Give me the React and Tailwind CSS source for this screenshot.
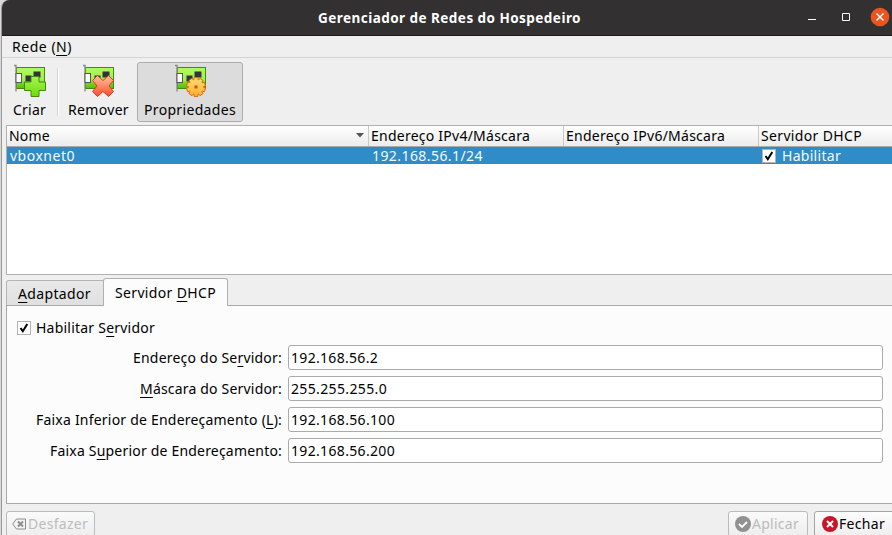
import { useLayoutEffect, useRef } from "react";

// A label tracked so that it fills the given width.
function Label({ width, className = "", children }) {
  const ref = useRef(null);
  useLayoutEffect(() => {
    const el = ref.current;
    el.style.letterSpacing = "0px";
    const natural = el.getBoundingClientRect().width;
    el.style.letterSpacing = (width - natural) / el.textContent.length + "px";
  }, [width]);
  return (
    <span ref={ref} className={"block shrink-0 whitespace-pre leading-5 " + className}>
      {children}
    </span>
  );
}

function Key({ children }) {
  return <span className="underline decoration-1 underline-offset-[3px]">{children}</span>;
}

// Outline of a ten-toothed gear centred on (22, 24).
const gearPoints = Array.from({ length: 10 }, (_, i) =>
  [[-0.2, 9.6], [0.2, 9.6], [0.26, 7.6], [0.37, 7.6]].map(([offset, r]) => {
    const a = ((i + 0.5) * Math.PI) / 5 + offset;
    return (22 + r * Math.cos(a)).toFixed(2) + "," + (24 + r * Math.sin(a)).toFixed(2);
  }).join(" ")
).join(" ");

function Card({ children }) {
  return (
    <svg width="34" height="35" viewBox="0 0 34 35" className="block">
      <defs>
        <linearGradient id="board" x1="0" y1="0" x2="0" y2="1">
          <stop offset="0" stopColor="#aefb5c" />
          <stop offset=".6" stopColor="#a0f050" />
          <stop offset=".75" stopColor="#76d51a" />
          <stop offset="1" stopColor="#5dba0c" />
        </linearGradient>
        <linearGradient id="plus" x1="0" y1="0" x2="0" y2="1">
          <stop offset="0" stopColor="#a4f552" />
          <stop offset="1" stopColor="#70dc08" />
        </linearGradient>
        <linearGradient id="cross" x1="0" y1="0" x2="0" y2="1">
          <stop offset="0" stopColor="#ffc09a" />
          <stop offset=".5" stopColor="#ff8a66" />
          <stop offset="1" stopColor="#fb4c2b" />
        </linearGradient>
        <linearGradient id="gear" x1="0" y1="0" x2="0" y2="1">
          <stop offset="0" stopColor="#ffdd78" />
          <stop offset="1" stopColor="#ffae2d" />
        </linearGradient>
      </defs>
      <rect x="3.5" y="4.5" width="28" height="21" fill="url(#board)" stroke="#438b0a" />
      <path d="M1 2.500h2v26" fill="none" stroke="#888" strokeWidth="1.3" />
      <rect x="3" y="10.500" width="5.500" height="9" fill="#fff" stroke="#555" />
      <path d="M12.500 12.500h6v6h-6zM20.500 8.500h7v6h-7z" fill="#333538" />
      {children}
    </svg>
  );
}

function Check() {
  return (
    <span className="flex h-[14px] w-[14px] shrink-0 items-center justify-center border border-[#b4b4b4] bg-white">
      <svg width="10" height="10" viewBox="0 0 10 10">
        <path d="M1.500 5l2.300 3.200L8.300 1" fill="none" stroke="#000" strokeWidth="2" />
      </svg>
    </span>
  );
}

function Field({ label, labelWidth, value, valueWidth }) {
  return (
    <div className="flex h-[25px] items-center">
      <div className="flex w-[275px] justify-end">
        <Label width={labelWidth}>{label}</Label>
      </div>
      <div className="ml-[6px] flex h-[25px] w-[595px] items-center rounded-[3px] border border-[#aaa] bg-white pl-[2px]">
        <Label width={valueWidth}>{value}</Label>
      </div>
    </div>
  );
}

export default function App() {
  return (
    <div className="h-[535px] w-[892px] overflow-hidden bg-[#d9d9d9] pl-px font-['Noto_Sans',sans-serif] text-[14px] text-black">
      <div className="flex h-full w-[891px] flex-col overflow-hidden rounded-tl-[8px] border-l border-[#999] bg-[#efefef]">
        <div className="flex h-9 shrink-0 items-center border-b border-[#1c1b1b] bg-[#333031] text-white">
          <Label width={263} className="ml-[316px] text-[13.5px] font-bold">Gerenciador de Redes do Hospedeiro</Label>
          <svg width="88" height="35" viewBox="804 0 88 35" className="ml-[223px] shrink-0">
            <path d="M808 19.500h8" stroke="#fff" />
            <path d="M842.500 13.500h7v7h-7z" fill="none" stroke="#fff" />
            <circle cx="880" cy="17" r="9.300" fill="#e95420" />
            <path d="M876.500 13.500l7 7m0-7l-7 7" stroke="#fff" strokeWidth="1.500" />
          </svg>
        </div>

        <div className="flex h-[22px] shrink-0 border-b border-[#d4d4d4] pl-[10px] pt-px">
          <Label width={60}>Rede (<Key>N</Key>)</Label>
        </div>

        <div className="flex h-[67px] shrink-0 pt-[4px]">
          <div className="flex w-[55px] flex-col items-center">
            <div className="mt-px h-[37px]">
              <Card>
                <path d="M18 13.500h8v5.500h6.500v8.500H26v6h-8v-6h-6.500V19H18z" fill="url(#plus)" stroke="#3f8d08" />
              </Card>
            </div>
            <Label width={33}>Criar</Label>
          </div>
          <div className="mt-[6px] h-12 w-[2px] border-l border-[#d3d3d3] bg-white" />
          <div className="flex w-[78px] flex-col items-center">
            <div className="mt-px h-[37px] pl-[2px]">
              <Card>
                <path d="M15.500 12.500L21 17.500 26.500 12.500 31.500 17.500 27 23l4.500 5.500-5 5L21 28.500l-5.500 5-5-5L15 23l-4.500-5.500z" fill="url(#cross)" stroke="#d93c20" strokeLinejoin="round" />
              </Card>
            </div>
            <Label width={61} className="ml-px">Remover</Label>
          </div>
          <div className="flex h-[60px] w-[106px] flex-col items-center rounded-[3px] border border-[#adadad] bg-[#dcdcdc]">
            <div className="h-[37px] pl-[2px]">
              <Card>
                <polygon points={gearPoints} fill="url(#gear)" stroke="#d96e0c" strokeLinejoin="round" />
                <circle cx="22" cy="24" r="1.700" fill="#bf5b12" stroke="#ee8b28" />
              </Card>
            </div>
            <Label width={92}>Propriedades</Label>
          </div>
        </div>

        <div className="ml-1 h-[150px] shrink-0 border-y border-l border-[#b0b0b0] bg-white">
          <div className="flex h-[21px] border-b border-[#aaa] bg-gradient-to-b from-white to-[#ececec]">
            <div className="flex w-[362px] justify-between border-r border-[#c9c9c9] pl-[2px] pr-[4px]">
              <Label width={41}>Nome</Label>
              <svg width="8" height="5" className="mt-[7px]"><path d="M0 0h8L4 4.500z" fill="#555" /></svg>
            </div>
            <div className="w-[195px] border-r border-[#c9c9c9] pl-[2px]"><Label width={159} className="w-fit">Endereço IPv4/Máscara</Label></div>
            <div className="w-[195px] border-r border-[#c9c9c9] pl-[2px]"><Label width={159} className="w-fit">Endereço IPv6/Máscara</Label></div>
            <div className="pl-[2px]"><Label width={101} className="w-fit">Servidor DHCP</Label></div>
          </div>
          <div className="flex h-[17px] items-center bg-[#308cc6] text-[#f4f9fc]">
            <div className="w-[365px] pl-[3px]"><Label width={65} className="w-fit">vboxnet0</Label></div>
            <div className="w-[390px]"><Label width={111} className="w-fit">192.168.56.1/24</Label></div>
            <Check />
            <Label width={59} className="ml-[6px]">Habilitar</Label>
          </div>
        </div>

        <div className="relative z-10 ml-1 mt-[3px] flex h-[27px] shrink-0 items-end">
          <div className="flex h-[25px] w-[98px] rounded-tl-[3px] border border-b-0 border-[#b4b4b4] bg-gradient-to-b from-[#e9e9e9] to-[#e0e0e0] pl-[11px] pt-[3px]">
            <Label width={73}><Key>A</Key>daptador</Label>
          </div>
          <div className="-mb-px -ml-px flex h-[28px] w-[125px] rounded-t-[3px] border border-b-0 border-[#b0b0b0] bg-[#fcfcfc] pl-[11px] pt-[4px]">
            <Label width={101}>Servidor <Key>D</Key>HCP</Label>
          </div>
        </div>
        <div className="ml-1 h-[199px] shrink-0 border-y border-l border-[#a9a9a9] bg-[#fcfcfc] pt-[12px]">
          <div className="flex h-5 items-center pl-[10px]">
            <Check />
            <Label width={119} className="ml-[5px]">Habilitar S<Key>e</Key>rvidor</Label>
          </div>
          <div className="mt-[7px] flex flex-col gap-[6px]">
            <Field label={<>Endereço do Se<Key>r</Key>vidor:</>} labelWidth={149} value="192.168.56.2" valueWidth={87} />
            <Field label={<><Key>M</Key>áscara do Servidor:</>} labelWidth={142} value="255.255.255.0" valueWidth={96} />
            <Field label={<>Faixa Inferior de Endereçamento (<Key>L</Key>):</>} labelWidth={246} value="192.168.56.100" valueWidth={104} />
            <Field label={<>Faixa S<Key>u</Key>perior de Endereçamento:</>} labelWidth={232} value="192.168.56.200" valueWidth={104} />
          </div>
        </div>

        <div className="flex h-[32px] shrink-0 pl-1 pt-[7px]">
          <div className="flex h-[26px] w-[89px] shrink-0 items-center rounded-[3px] border border-[#bbb] bg-gradient-to-b from-[#fafafa] to-[#eee] pl-[5px] text-[#bcbcbc]">
            <svg width="14" height="12" viewBox="0 0 14 12">
              <path d="M4.500 1h9v10h-9L.7 6z" fill="#f3f3f3" stroke="#8c8c8c" />
              <path d="M6 3.500l5 5m0-5l-5 5" stroke="#8c8c8c" strokeWidth="2" />
            </svg>
            <Label width={60} className="ml-[2px]">Desfazer</Label>
          </div>
          <div className="ml-[633px] flex h-[26px] w-[80px] shrink-0 items-center rounded-[3px] border border-[#bbb] bg-gradient-to-b from-[#fafafa] to-[#eee] pl-[6px] text-[#bcbcbc]">
            <svg width="16" height="16" viewBox="0 0 16 16">
              <circle cx="8" cy="8" r="8" fill="#919191" />
              <path d="M4 8l3 3 5-5" fill="none" stroke="#fff" strokeWidth="1.800" />
            </svg>
            <Label width={47} className="ml-px">Aplicar</Label>
          </div>
          <div className="ml-[6px] flex h-[26px] w-[90px] shrink-0 items-center rounded-[3px] border border-[#a5a5a5] bg-gradient-to-b from-[#fdfdfd] to-[#eee] pl-[7px]">
            <svg width="16" height="16" viewBox="0 0 16 16">
              <circle cx="8" cy="8" r="8" fill="#c7162b" />
              <path d="M5 5l6 6m0-6l-6 6" stroke="#fff" strokeWidth="2" />
            </svg>
            <Label width={46} className="ml-px">Fechar</Label>
          </div>
        </div>
      </div>
    </div>
  );
}
